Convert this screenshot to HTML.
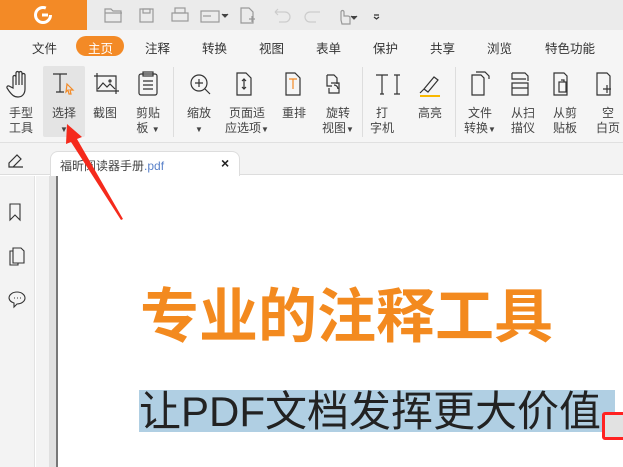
<!DOCTYPE html>
<html><head><meta charset="utf-8"><style>
*{margin:0;padding:0;box-sizing:border-box}
body{width:623px;height:467px;overflow:hidden;background:#fff;font-family:"Liberation Sans","Noto Sans CJK SC",sans-serif;position:relative;color:#333}
.a{position:absolute}
.t{font-size:12px;color:#444;position:absolute;text-align:center;line-height:15px}
.m{position:absolute;top:38px;font-size:12.5px;color:#333}
svg{position:absolute}
</style></head><body>
<div class="a" style="left:0;top:0;width:623px;height:30px;background:#ebebeb"></div>
<div class="a" style="left:0;top:0;width:87px;height:30px;background:#f38a26"></div>
<svg style="left:33px;top:5px" width="20" height="20" viewBox="0 0 20 20"><circle cx="10" cy="10" r="7.5" fill="none" stroke="#fff" stroke-width="3" stroke-dasharray="38 10"/><path d="M9 10h6" stroke="#fff" stroke-width="3"/></svg>
<svg style="left:100px;top:4px" width="290" height="22" fill="none" stroke="#999" stroke-width="1.2"><path d="M5 5h6l2 2h8v11H5z M5 9h17"/><rect x="40" y="5" width="13" height="13"/><rect x="43" y="5" width="7" height="4"/><rect x="72" y="9" width="16" height="8"/><rect x="75" y="4" width="10" height="5"/><rect x="101" y="7" width="18" height="11"/><path d="M103 12h8"/><path d="M122 10l3 3 3-3" fill="#444" stroke="#444"/><path d="M141 4h8l4 4v11h-12z M149 15h6M152 12v6"/><path d="M175 8h10a5 5 0 010 10h-6 M175 8l3-3M175 8l3 3" stroke="#ccc"/><path d="M220 8h-10a5 5 0 000 10h6" stroke="#ccc"/><path d="M241 16v-8a1.5 1.5 0 013 0v4h4a2 2 0 012 2v6h-8z"/><path d="M251 12l3 3 3-3" fill="#444" stroke="#444"/><path d="M274 11h5M274 13l2.5 2 2.5-2" stroke="#333"/></svg>
<div class="a" style="left:0;top:30px;width:623px;height:113px;background:#f5f5f5"></div>
<span class="m" style="left:32px">文件</span>
<div class="a" style="left:76px;top:36px;width:48px;height:20px;border-radius:10px;background:#f38a26"></div>
<span class="m" style="left:88px;color:#fff">主页</span>
<span class="m" style="left:145px">注释</span><span class="m" style="left:202px">转换</span><span class="m" style="left:259px">视图</span><span class="m" style="left:316px">表单</span><span class="m" style="left:373px">保护</span><span class="m" style="left:430px">共享</span><span class="m" style="left:487px">浏览</span><span class="m" style="left:545px">特色功能</span>
<div class="a" style="left:43px;top:66px;width:42px;height:71px;background:#e4e4e4;border-radius:2px"></div>
<div class="a" style="left:173px;top:67px;width:1px;height:70px;background:#ddd"></div>
<div class="a" style="left:362px;top:67px;width:1px;height:70px;background:#ddd"></div>
<div class="a" style="left:455px;top:67px;width:1px;height:70px;background:#ddd"></div>
<svg style="left:0;top:64px" width="623" height="40" fill="none" stroke="#333" stroke-width="1.2">
<path d="M13 24v-11a1.5 1.5 0 013 0v8v-12a1.5 1.5 0 013 0v12v-12a1.5 1.5 0 013 0v12v-10a1.5 1.5 0 013 0v14c0 5-3 8-7 8s-6-2-9-6l-2-3a1.5 1.5 0 012-2z"/>
<path d="M53 10h14M60 10v18M56 28h8"/><path d="M67 20l6 6h-3l1 4-2 0-1-4-2 2z" stroke="#f38a26"/>
<path d="M94 12h22v18M97 9v18h22"/><path d="M98 25l5-6 4 4 3-3 5 5"/><circle cx="110" cy="17" r="1"/>
<rect x="139" y="10" width="18" height="21" rx="2"/><rect x="143" y="8" width="10" height="4"/><path d="M143 17h10M143 21h10M143 25h10"/>
<circle cx="199" cy="19" r="8"/><path d="M205 25l5 5M199 15v8M195 19h8"/>
<path d="M237 9h9l5 5v17h-14z M244 15v10M242 17l2-2 2 2M242 23l2 2 2-2"/>
<path d="M286 9h9l5 5v17h-14z" /><path d="M289 15h8M293 15v10" stroke="#f38a26"/>
<path d="M327 11h7l3 3v6M327 11v11h5"/><path d="M331 19h8v10h-10v-5"/><path d="M334 21a4 4 0 014 4"/>
<path d="M376 11h12M382 11v19M380 30h4M394 11h6M397 11v19M394 30h6"/>
<path d="M424 25l10-12 4 3-10 12z M420 29l4-4" /><path d="M420 32h20" stroke="#f9b800" stroke-width="2"/>
<path d="M472 11h9l3 3v17h-12z M476 8h9l4 4v3"/>
<path d="M512 9h13l3 3v5M512 9v6h14M512 19h16v12h-16zM512 24h16"/>
<path d="M554 9h10l3 3v19h-13z"/><rect x="559" y="18" width="7" height="10"/><path d="M561 16h3v2"/>
<path d="M597 9h10l3 3v19h-13zM603 25h8M607 21v8"/>
</svg>
<div class="t" style="left:5px;top:106px;width:32px">手型<br>工具</div>
<div class="t" style="left:44px;top:106px;width:40px">选择<br><span style="font-size:8px">▼</span></div>
<div class="t" style="left:89px;top:106px;width:32px">截图</div>
<div class="t" style="left:130px;top:106px;width:36px">剪贴<br>板 <span style="font-size:8px">▼</span></div>
<div class="t" style="left:183px;top:106px;width:32px">缩放<br><span style="font-size:8px">▼</span></div>
<div class="t" style="left:222px;top:106px;width:50px">页面适<br>应选项<span style="font-size:8px">▼</span></div>
<div class="t" style="left:278px;top:106px;width:32px">重排</div>
<div class="t" style="left:318px;top:106px;width:40px">旋转<br>视图<span style="font-size:8px">▼</span></div>
<div class="t" style="left:366px;top:106px;width:32px">打<br>字机</div>
<div class="t" style="left:414px;top:106px;width:32px">高亮</div>
<div class="t" style="left:460px;top:106px;width:40px">文件<br>转换<span style="font-size:8px">▼</span></div>
<div class="t" style="left:507px;top:106px;width:32px">从扫<br>描仪</div>
<div class="t" style="left:549px;top:106px;width:32px">从剪<br>贴板</div>
<div class="t" style="left:592px;top:106px;width:32px">空<br>白页</div>
<div class="a" style="left:0;top:142px;width:623px;height:1px;background:#e0e0e0"></div>
<div class="a" style="left:0;top:143px;width:623px;height:32px;background:#f3f3f3;border-bottom:1px solid #ddd"></div>
<svg style="left:6px;top:152px" width="18" height="16" fill="none" stroke="#333" stroke-width="1.2"><path d="M3 11l8-8 4 4-8 8H3zM7 15h10"/></svg>
<div class="a" style="left:50px;top:151px;width:190px;height:25px;background:#fff;border:1px solid #ddd;border-bottom:none;border-radius:8px 8px 0 0"></div>
<span class="a" style="left:60px;top:157px;font-size:12px;color:#444">福昕阅读器手册<span style="color:#5b82c9">.pdf</span></span>
<span class="a" style="left:221px;top:155px;font-size:14px;font-weight:bold;color:#222">×</span>
<div class="a" style="left:0;top:176px;width:35px;height:291px;background:#f3f3f3;border-right:1px solid #e2e2e2"></div>
<div class="a" style="left:36px;top:176px;width:13px;height:291px;background:#f3f3f3"></div>
<div class="a" style="left:49px;top:176px;width:7px;height:291px;background:#e0e0e0"></div>
<div class="a" style="left:56px;top:176px;width:2px;height:291px;background:#777"></div>
<svg style="left:6px;top:200px" width="24" height="110" fill="none" stroke="#333" stroke-width="1.1"><path d="M4 4h10v16l-5-5-5 5z"/><path d="M7 48h8l3 3v12h-11zM7 51h-3v14h8v-2"/><path d="M3 98a8 6 0 1116 0a8 6 0 01-8 6l-3 3v-4a8 6 0 01-5-5z"/><path d="M8 98h1M11 98h1M14 98h1"/></svg>
<div class="a" style="left:140px;top:282px;font-size:59px;font-weight:bold;color:#f38a1f;line-height:70px;white-space:nowrap">专业的注释工具</div>
<div class="a" style="left:139px;top:390px;width:476px;height:42px;background:#b0cfe3"></div>
<div class="a" style="left:139px;top:384px;font-size:42px;color:#222;line-height:56px;white-space:nowrap">让PDF文档发挥更大价值</div>
<div class="a" style="left:602px;top:412px;width:30px;height:28px;border:3px solid #f22;border-radius:3px;background:#e2e2e2"></div>
<svg style="left:0;top:0" width="623" height="467"><polygon points="67,124 82,137 77,139 123,219 121,220 71,142 66,144" fill="#f52a1c"/></svg>
</body></html>
